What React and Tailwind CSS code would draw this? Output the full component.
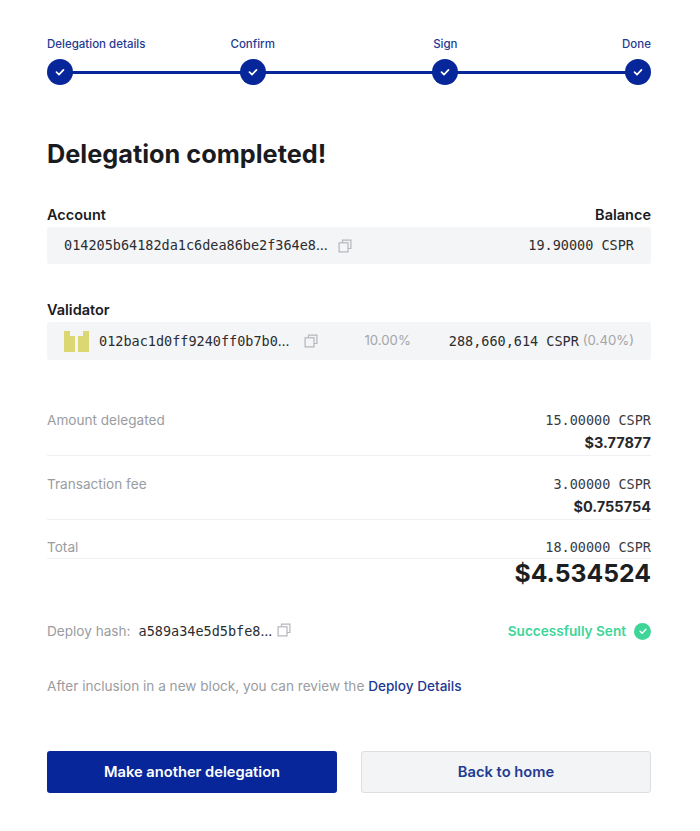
const MONO = "font-['DejaVu_Sans_Mono',monospace]";

function Check({ className }) {
  return (
    <svg viewBox="0 0 12 12" fill="none" className={className}>
      <path d="M2.5 6.2 5 8.6l4.5-4.8" stroke="currentColor" strokeWidth="1.7" strokeLinecap="round" strokeLinejoin="round" />
    </svg>
  );
}

function CopyIcon({ className = "" }) {
  return (
    <svg viewBox="0 0 14 14" fill="none" stroke="#b3b6bc" strokeWidth="1.2" className={`h-[14px] w-[14px] shrink-0 ${className}`}>
      <path d="M4.5 3.8V1.1h8.4v8.4H10" />
      <rect x="1.1" y="3.8" width="8.9" height="9.1" />
    </svg>
  );
}

function Identicon() {
  return (
    <svg viewBox="0 0 25 21" className="h-[21px] w-[25px] shrink-0" fill="#dbd873">
      <path d="M0 0h6v5h5v16H0z" />
      <path d="M14 5h5V0h6v21H14z" />
    </svg>
  );
}

function Dots() {
  return <span className="font-['Inter',sans-serif]">…</span>;
}

function Step({ label, align }) {
  return (
    <div className={`flex w-[26px] flex-col ${align}`}>
      <span className="text-[11.5px] leading-[16px] font-medium whitespace-nowrap text-[#1f3a93]">{label}</span>
      <div className="mt-[7px] flex h-[26px] w-[26px] items-center justify-center rounded-full bg-[#06269a] text-white">
        <Check className="h-3 w-3" />
      </div>
    </div>
  );
}

function SummaryRow({ label, cspr, usd }) {
  return (
    <div className="border-b border-[#eff0f2] pb-[1px]">
      <div className="flex items-center justify-between">
        <span className="text-[13.6px] leading-[20px] text-[#9a9ca1]">{label}</span>
        <span className={`${MONO} text-[13.5px] leading-[20px] text-[#3a3b3f]`}>{cspr}</span>
      </div>
      <div className="mt-[2px] text-right text-[14.5px] leading-[22px] font-bold text-[#26272b]">{usd}</div>
    </div>
  );
}

export default function App() {
  return (
    <div className="min-h-[831px] bg-white pt-[36px] pr-[49px] pl-[47px] font-['Inter',sans-serif] text-[#1a1b1f]">
      <div className="relative flex justify-between">
        <div className="absolute top-[35px] right-[10px] left-[10px] h-[3px] bg-[#06269a]" />
        <div className="relative flex w-full justify-between">
          <Step label="Delegation details" align="items-start" />
          <Step label="Confirm" align="items-center" />
          <Step label="Sign" align="items-center" />
          <Step label="Done" align="items-end" />
        </div>
      </div>

      <h1 className="mt-[53px] text-[25.3px] leading-[32px] font-bold">Delegation completed!</h1>

      <div className="mt-[35px] flex justify-between text-[14.5px] leading-[20px] font-semibold">
        <span>Account</span>
        <span>Balance</span>
      </div>
      <div className={`${MONO} mt-[2px] flex h-[37px] items-center justify-between rounded-[3px] bg-[#f4f5f6] pr-[17px] pl-[17px] text-[13.5px] text-[#2c2d31]`}>
        <div className="flex items-center gap-[10px]">
          <span>014205b64182da1c6dea86be2f364e8<Dots /></span>
          <CopyIcon />
        </div>
        <span>19.90000 CSPR</span>
      </div>

      <div className="mt-[36px] text-[14.5px] leading-[20px] font-semibold">Validator</div>
      <div className={`${MONO} mt-[2px] flex h-[38px] items-center rounded-[3px] bg-[#f4f5f6] pr-[17px] pl-[17px] text-[13.5px] text-[#2c2d31]`}>
        <Identicon />
        <span className="ml-[10px]">012bac1d0ff9240ff0b7b0<Dots /></span>
        <CopyIcon className="ml-[15px]" />
        <span className="ml-[46px] font-['Inter',sans-serif] text-[13.2px] text-[#a3a5aa]">10.00%</span>
        <span className="ml-auto">288,660,614 CSPR</span>
        <span className="ml-[4px] font-['Inter',sans-serif] text-[13.2px] text-[#a3a5aa]">(0.40%)</span>
      </div>

      <div className="mt-[50px] flex flex-col gap-[18px]">
        <SummaryRow label="Amount delegated" cspr="15.00000 CSPR" usd="$3.77877" />
        <SummaryRow label="Transaction fee" cspr="3.00000 CSPR" usd="$0.755754" />
      </div>

      <div className="mt-[17px] flex items-center justify-between border-b border-[#eff0f2] pb-[1px]">
        <span className="text-[13.6px] leading-[20px] text-[#9a9ca1]">Total</span>
        <span className={`${MONO} text-[13.5px] leading-[20px] text-[#3a3b3f]`}>18.00000 CSPR</span>
      </div>
      <div className="text-right text-[24.75px] leading-[28px] font-bold text-[#1d1e22]">$4.534524</div>

      <div className="mt-[34px] flex items-center justify-between">
        <div className="flex items-center">
          <span className="text-[13.6px] text-[#9a9ca1]">Deploy hash:</span>
          <span className={`${MONO} ml-[8px] text-[13.5px] text-[#2c2d31]`}>a589a34e5d5bfe8<Dots /></span>
          <CopyIcon className="mb-[3px] ml-[5px]" />
        </div>
        <div className="flex items-center gap-[8px]">
          <span className="text-[13.6px] font-semibold text-[#3ed598]">Successfully Sent</span>
          <div className="flex h-[17px] w-[17px] items-center justify-center rounded-full bg-[#3ed598] text-white">
            <Check className="h-[10px] w-[10px]" />
          </div>
        </div>
      </div>

      <p className="mt-[35px] text-[13.6px] leading-[20px] text-[#9a9ca1]">
        After inclusion in a new block, you can review the <span className="font-medium text-[#1f3a93]">Deploy Details</span>
      </p>

      <div className="mt-[55px] grid grid-cols-2 gap-[24px]">
        <button className="h-[42px] rounded-[3px] bg-[#06269a] text-[14.7px] font-semibold text-white">Make another delegation</button>
        <button className="h-[42px] rounded-[3px] border border-[#dcdee2] bg-[#f3f4f6] text-[14.7px] font-semibold text-[#1f3a93]">Back to home</button>
      </div>
    </div>
  );
}
